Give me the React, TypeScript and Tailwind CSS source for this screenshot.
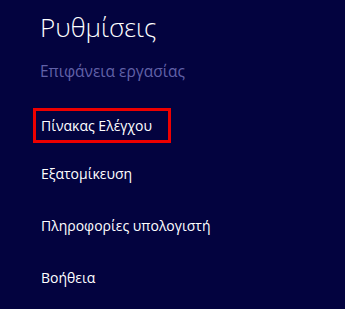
const items = [
  { label: 'Πίνακας Ελέγχου', gap: 'mt-0' },
  { label: 'Εξατομίκευση', gap: 'mt-[13px]' },
  { label: 'Πληροφορίες υπολογιστή', gap: 'mt-[17px]' },
  { label: 'Βοήθεια', gap: 'mt-[17px]' },
]

export default function App() {
  return (
    <div
      className="w-[345px] h-[309px] bg-[#03033f] text-white pl-[33px] pt-[10px] overflow-hidden"
      style={{ fontFamily: '"Open Sans", "Noto Sans", "DejaVu Sans", sans-serif' }}
    >
      <h1 className="pl-[7px] text-[26px] font-light leading-[34px]">Ρυθμίσεις</h1>
      <p className="pl-[7px] mt-[17px] text-[15.5px] leading-[20px] text-[#6161a8]">Επιφάνεια εργασίας</p>

      <ul className="mt-[27px] flex flex-col">
        {items.map((it, i) => (
          <li
            key={it.label}
            className={
              'h-[35px] flex items-center px-[5px] border-[3px] text-[14px] ' +
              it.gap +
              ' ' +
              (i === 0 ? 'w-[138px] border-[#ee0000]' : 'border-transparent')
            }
          >
            {it.label}
          </li>
        ))}
      </ul>
    </div>
  )
}
